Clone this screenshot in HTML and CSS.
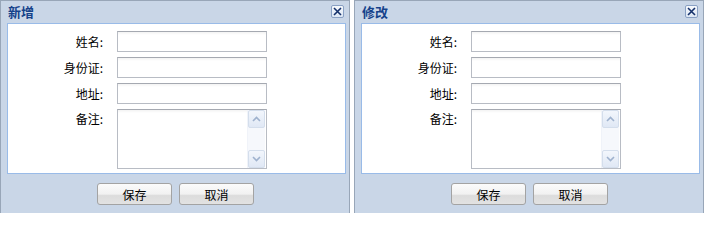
FILE: index.html
```html
<!DOCTYPE html>
<html lang="zh-CN">
<head>
<meta charset="utf-8">
<title>窗口</title>
<link rel="stylesheet" href="styles.css">
</head>
<body>
<div class="desk">
  <div class="win">
    <div class="win-head">
      <span class="win-title">新增</span>
      <span class="win-close"><svg width="9" height="9" viewBox="0 0 9 9"><path d="M1 1L8 8M8 1L1 8" stroke="#15316b" stroke-width="1.6" fill="none"/></svg></span>
    </div>
    <div class="win-body">
      <div class="form">
        <label class="lbl">姓名:</label><input class="field" type="text">
        <label class="lbl">身份证:</label><input class="field" type="text">
        <label class="lbl">地址:</label><input class="field" type="text">
        <label class="lbl lbl-top">备注:</label>
        <div class="area">
          <textarea class="area-text"></textarea>
          <div class="sbar">
            <div class="sbtn"><svg width="9" height="6" viewBox="0 0 9 6"><path d="M1 5L4.5 1.5L8 5" stroke="#9fb2ce" stroke-width="1.6" fill="none"/></svg></div>
            <div class="strack"></div>
            <div class="sbtn"><svg width="9" height="6" viewBox="0 0 9 6"><path d="M1 1L4.5 4.5L8 1" stroke="#9fb2ce" stroke-width="1.6" fill="none"/></svg></div>
          </div>
        </div>
      </div>
    </div>
    <div class="win-foot">
      <button class="btn" type="button">保存</button>
      <button class="btn" type="button">取消</button>
    </div>
  </div>
  <div class="win">
    <div class="win-head">
      <span class="win-title">修改</span>
      <span class="win-close"><svg width="9" height="9" viewBox="0 0 9 9"><path d="M1 1L8 8M8 1L1 8" stroke="#15316b" stroke-width="1.6" fill="none"/></svg></span>
    </div>
    <div class="win-body">
      <div class="form">
        <label class="lbl">姓名:</label><input class="field" type="text">
        <label class="lbl">身份证:</label><input class="field" type="text">
        <label class="lbl">地址:</label><input class="field" type="text">
        <label class="lbl lbl-top">备注:</label>
        <div class="area">
          <textarea class="area-text"></textarea>
          <div class="sbar">
            <div class="sbtn"><svg width="9" height="6" viewBox="0 0 9 6"><path d="M1 5L4.5 1.5L8 5" stroke="#9fb2ce" stroke-width="1.6" fill="none"/></svg></div>
            <div class="strack"></div>
            <div class="sbtn"><svg width="9" height="6" viewBox="0 0 9 6"><path d="M1 1L4.5 4.5L8 1" stroke="#9fb2ce" stroke-width="1.6" fill="none"/></svg></div>
          </div>
        </div>
      </div>
    </div>
    <div class="win-foot">
      <button class="btn" type="button">保存</button>
      <button class="btn" type="button">取消</button>
    </div>
  </div>
</div>
</body>
</html>
```
FILE: styles.css
```css
html, body {
  margin: 0;
  padding: 0;
  background: #ffffff;
  overflow: hidden;
}
body {
  font-family: "Noto Sans CJK SC", "Noto Sans", sans-serif;
  font-size: 12px;
  color: #000;
}
.desk {
  display: flex;
  gap: 4px;
  width: 706px;
  height: 213px;
  overflow: hidden;
}
.win {
  flex: none;
  width: 350px;
  height: 230px;
  box-sizing: border-box;
  border: 1px solid #98a6b8;
  background: #c9d6e7;
  display: flex;
  flex-direction: column;
}
.win-head {
  height: 22px;
  display: flex;
  align-items: center;
  justify-content: space-between;
  padding: 0 5px 0 7px;
}
.win-title {
  font-weight: bold;
  color: #15428b;
  font-size: 13px;
  line-height: 14px;
  margin-top: -1px;
}
.win-close {
  width: 11px;
  height: 11px;
  border: 1px solid #8aa1c4;
  border-radius: 2px;
  background: linear-gradient(#f6f9fd, #dde7f4);
  display: flex;
  align-items: center;
  justify-content: center;
  margin-top: -1px;
}
.win-body {
  margin: 0 3px 0 6px;
  border: 1px solid #99bbe8;
  background: #ffffff;
  padding-top: 7px;
  height: 142px;
}
.form {
  display: grid;
  grid-template-columns: 100px 150px;
  column-gap: 9px;
  row-gap: 5px;
  align-items: center;
}
.lbl {
  text-align: right;
  line-height: 14px;
  padding-right: 5px;
}
.lbl-top {
  align-self: start;
  padding-top: 3px;
}
.field {
  box-sizing: border-box;
  width: 150px;
  height: 21px;
  margin: 0;
  border: 1px solid #b8bcc4;
  border-top-color: #a5a9b1;
  background: linear-gradient(#f3f3f3 0, #ffffff 3px, #ffffff 100%);
  padding: 0 3px;
  font: inherit;
}
.area {
  box-sizing: border-box;
  width: 150px;
  height: 60px;
  border: 1px solid #b8bcc4;
  border-top-color: #a5a9b1;
  background: #ffffff;
  display: flex;
}
.area-text {
  flex: 1;
  border: 0;
  margin: 0;
  padding: 2px;
  resize: none;
  outline: none;
  background: linear-gradient(#f3f3f3 0, #ffffff 3px);
  font: inherit;
}
.sbar {
  width: 17px;
  margin: 0 1px 0 0;
  display: flex;
  flex-direction: column;
  background: #f5f7fc;
  border-left: 1px solid #f0f3f9;
}
.sbtn {
  height: 16px;
  border: 1px solid #d4deec;
  border-radius: 2px;
  background: linear-gradient(#f2f6fc, #e0e8f5);
  display: flex;
  align-items: center;
  justify-content: center;
}
.strack {
  flex: 1;
  background: #f6f8fc;
}
.win-foot {
  display: flex;
  justify-content: center;
  gap: 7px;
  padding-top: 9px;
  margin-left: 1px;
}
.btn {
  width: 75px;
  height: 22px;
  margin: 0;
  padding: 0;
  border: 1px solid #a3a3a3;
  border-radius: 3px;
  background: linear-gradient(#fbfbfb 0, #f1f1f1 50%, #dcdcdc 58%, #e2e2e2 100%);
  font: inherit;
  color: #000;
}
```
